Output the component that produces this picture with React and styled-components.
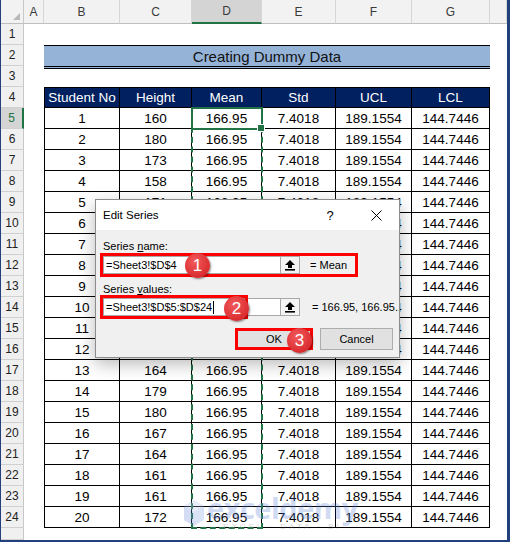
import React from 'react';
import styled, { createGlobalStyle } from 'styled-components';

const GlobalStyle = createGlobalStyle`
  html, body { margin: 0; padding: 0; background: #fff; overflow: hidden; }
  * { box-sizing: border-box; }
`;

const COLS = ['A', 'B', 'C', 'D', 'E', 'F', 'G', ''];
const HEADERS = ['Student No', 'Height', 'Mean', 'Std', 'UCL', 'LCL'];
const HEIGHTS = [160, 180, 173, 158, 171, 165, 170, 158, 162, 166, 155, 173, 164, 179, 180, 167, 164, 161, 161, 172];

const Frame = styled.div`
  width: 510px;
  height: 542px;
  border-left: 1px solid #23407e;
  border-right: 3px solid #23407e;
  border-bottom: 2px solid #23407e;
  overflow: hidden;
  background: #fff;
`;

const Sheet = styled.div`
  position: relative;
  display: grid;
  grid-template-columns: 23px 20px 76px 72px 70px 74px 76px 78px 1fr;
  grid-template-rows: 24px repeat(24, 21px) 1fr;
  height: 100%;
  font-family: "Liberation Sans", Arial, sans-serif;
`;

const Corner = styled.div`
  position: relative;
  background: #f2f2f2;
  border-right: 1px solid #c8c8c8;
  border-bottom: 1px solid #bfbfbf;

  &::after {
    content: '';
    position: absolute;
    right: 3px;
    bottom: 3px;
    border-left: 7px solid transparent;
    border-bottom: 7px solid #b8b8b8;
  }
`;

const ColHead = styled.div`
  display: flex;
  align-items: center;
  justify-content: center;
  background: ${p => (p.$active ? '#d4d4d4' : '#f2f2f2')};
  border-right: 1px solid #d6d6d6;
  border-bottom: ${p => (p.$active ? '2px solid #217346' : '1px solid #bfbfbf')};
  font-size: 12px;
  color: #3a3a3a;
`;

const RowHead = styled.div`
  display: flex;
  align-items: center;
  justify-content: center;
  background: ${p => (p.$active ? '#d4d4d4' : '#f0f0f0')};
  border-right: ${p => (p.$active ? '2px solid #217346' : '1px solid #c8c8c8')};
  border-bottom: 1px solid #d0d0d0;
  font-size: 12px;
  color: ${p => (p.$active ? '#217346' : '#222')};
`;

const Blank = styled.div``;

const TitleCell = styled.div`
  grid-column: span 6;
  margin-bottom: -3px;
  display: flex;
  align-items: center;
  justify-content: center;
  background: #95b3d7;
  border-top: 1px solid #000;
  border-bottom: 3px double #000;
  font-size: 15px;
  color: #111;
`;

const HeadCell = styled.div`
  display: flex;
  align-items: center;
  justify-content: center;
  background: #002060;
  color: #fff;
  font-size: 13.5px;
  border-top: 1px solid #000;
  border-right: 1px solid #000;
  border-bottom: 1px solid #000;
  border-left: ${p => (p.$first ? '1px solid #000' : 'none')};
`;

const DataCell = styled.div`
  display: flex;
  align-items: center;
  justify-content: center;
  font-size: 13.5px;
  color: #000;
  border-right: 1px solid #000;
  border-bottom: 1px solid #000;
  border-left: ${p => (p.$first ? '1px solid #000' : 'none')};
`;

const CopyRange = styled.div`
  position: absolute;
  left: 190px;
  top: 107px;
  width: 72px;
  height: 422px;
  border: 2px dashed #217346;
  pointer-events: none;
`;

const ActiveCell = styled.div`
  position: absolute;
  left: 190px;
  top: 107px;
  width: 72px;
  height: 23px;
  border: 2px solid #217346;
  pointer-events: none;

  &::after {
    content: '';
    position: absolute;
    right: -4px;
    bottom: -4px;
    width: 6px;
    height: 6px;
    background: #217346;
    border: 1px solid #fff;
  }
`;

const Watermark = styled.div`
  position: absolute;
  left: 182px;
  top: 494px;
  display: flex;
  align-items: center;
  gap: 2px;
  opacity: 0.28;
  pointer-events: none;
`;

const MarkWords = styled.div`
  display: flex;
  flex-direction: column;
  align-items: center;
  color: #5b7fd6;
`;

const MarkName = styled.span`
  font-family: "Open Sans", "Liberation Sans", sans-serif;
  font-size: 29px;
  font-weight: 700;
  line-height: 28px;
  letter-spacing: -0.5px;
`;

const MarkTag = styled.span`
  font-family: "Liberation Sans", Arial, sans-serif;
  font-size: 8px;
  letter-spacing: 3px;
  color: #6d6d6d;
`;

/* dialog */

const Dialog = styled.div`
  position: absolute;
  left: 94px;
  top: 199px;
  width: 305px;
  height: 159px;
  display: flex;
  flex-direction: column;
  background: #f0f0f0;
  border: 1px solid #8c8c8c;
  box-shadow: 0 6px 16px rgba(0, 0, 0, 0.28);
  font-family: "Liberation Sans", Arial, sans-serif;
  font-size: 11px;
  color: #000;
  overflow: hidden;
`;

const TitleBar = styled.div`
  height: 30px;
  flex: none;
  display: flex;
  align-items: center;
  padding-left: 7px;
  background: #fff;
`;

const DialogTitle = styled.span`
  flex: 1;
  font-size: 11.5px;
`;

const CaptionButton = styled.div`
  width: 46px;
  height: 30px;
  display: flex;
  align-items: center;
  justify-content: center;
  font-size: 13px;
`;

const DialogBody = styled.div`
  display: flex;
  flex-direction: column;
  padding: 9px 6px 0 7px;
`;

const Label = styled.div`
  line-height: 14px;
  margin-top: ${p => p.$gap}px;

  u { text-decoration: underline; }
`;

const FieldRow = styled.div`
  position: relative;
  display: flex;
  align-items: center;
  height: 18px;
  margin-top: ${p => p.$gap}px;
  white-space: nowrap;
`;

const RefInput = styled.div`
  flex: none;
  width: 177px;
  height: 18px;
  display: flex;
  align-items: center;
  padding-left: 2px;
  background: #fff;
  border: 1px solid #a8a8a8;
  border-right: none;
`;

const Caret = styled.span`
  display: inline-block;
  width: 1px;
  height: 13px;
  margin-left: 1px;
  background: #000;
`;

const CollapseButton = styled.div`
  width: 20px;
  height: 18px;
  flex: none;
  display: flex;
  align-items: center;
  justify-content: center;
  background: #f4f4f4;
  border: 1px solid #a8a8a8;
`;

const Preview = styled.span`
  flex: none;
  margin-left: ${p => p.$gap}px;
`;

const ButtonRow = styled.div`
  display: flex;
  justify-content: flex-end;
  gap: 9px;
  margin-top: 12px;
`;

const Button = styled.div`
  position: relative;
  width: ${p => p.$w}px;
  height: 22px;
  display: flex;
  align-items: center;
  justify-content: center;
  background: #e1e1e1;
  border: 1px solid #adadad;
`;

const RedMark = styled.div`
  position: absolute;
  left: ${p => p.$x}px;
  top: ${p => p.$y}px;
  width: ${p => p.$w}px;
  height: ${p => p.$h}px;
  border: 3px solid #ff0000;
  pointer-events: none;
`;

const Badge = styled.div`
  position: absolute;
  left: ${p => p.$x}px;
  top: ${p => p.$y}px;
  width: 25px;
  height: 25px;
  border-radius: 50%;
  display: flex;
  align-items: center;
  justify-content: center;
  background: radial-gradient(circle at 40% 35%, #f25a5c, #dc3033 65%, #b9201f);
  box-shadow: 1px 1px 2px rgba(0, 0, 0, 0.45);
  color: #fff;
  font-size: 17px;
  font-family: "Liberation Sans", Arial, sans-serif;
`;

const UpIcon = () => (
  <svg width="10" height="11" viewBox="0 0 10 11">
    <path d="M5 0 L10 5 H7 V8 H3 V5 H0 Z" fill="#000" />
    <rect x="0" y="9" width="10" height="1.6" fill="#000" />
  </svg>
);

const CloseIcon = () => (
  <svg width="11" height="11" viewBox="0 0 11 11">
    <path d="M0.5 0.5 L10.5 10.5 M10.5 0.5 L0.5 10.5" stroke="#000" strokeWidth="1" />
  </svg>
);

const CubeIcon = () => (
  <svg width="22" height="30" viewBox="0 0 22 30">
    <path d="M11 2 L21 8 V22 L11 28 L1 22 V8 Z" fill="#7d9be0" />
    <path d="M11 2 L21 8 L11 14 L1 8 Z" fill="#aebff0" />
    <path d="M11 14 V28 L1 22 V8 Z" fill="#6585d6" />
  </svg>
);

const EditSeries = () => (
  <Dialog>
    <TitleBar>
      <DialogTitle>Edit Series</DialogTitle>
      <CaptionButton>?</CaptionButton>
      <CaptionButton><CloseIcon /></CaptionButton>
    </TitleBar>
    <DialogBody>
      <Label $gap={0}>Series <u>n</u>ame:</Label>
      <FieldRow $gap={3}>
        <RefInput>=Sheet3!$D$4</RefInput>
        <CollapseButton><UpIcon /></CollapseButton>
        <Preview $gap={10}>= Mean</Preview>
        <RedMark $x={-3} $y={-3} $w={258} $h={24} />
        <Badge $x={82} $y={-3}>1</Badge>
      </FieldRow>
      <Label $gap={8}>Series <u>v</u>alues:</Label>
      <FieldRow $gap={2}>
        <RefInput>=Sheet3!$D$5:$D$24<Caret /></RefInput>
        <CollapseButton><UpIcon /></CollapseButton>
        <Preview $gap={12}>= 166.95, 166.95...</Preview>
        <RedMark $x={-3} $y={-3} $w={148} $h={24} />
        <Badge $x={121} $y={-2}>2</Badge>
      </FieldRow>
      <ButtonRow>
        <Button $w={74}>
          OK
          <RedMark $x={-3} $y={-1} $w={78} $h={22} />
          <Badge $x={49} $y={-1}>3</Badge>
        </Button>
        <Button $w={73}>Cancel</Button>
      </ButtonRow>
    </DialogBody>
  </Dialog>
);

const renderRow = r => {
  const cells = [
    <RowHead key="rh" $active={r === 5}>{r <= 24 ? r : ''}</RowHead>,
    <Blank key="A" />,
  ];
  if (r === 2) {
    cells.push(<TitleCell key="title">Creating Dummy Data</TitleCell>);
  } else if (r === 4) {
    HEADERS.forEach((h, i) => cells.push(<HeadCell key={h} $first={i === 0}>{h}</HeadCell>));
  } else if (r >= 5 && r <= 24) {
    const n = r - 4;
    const values = [n, HEIGHTS[n - 1], '166.95', '7.4018', '189.1554', '144.7446'];
    values.forEach((v, i) => cells.push(<DataCell key={i} $first={i === 0}>{v}</DataCell>));
  } else {
    for (let i = 0; i < 6; i++) cells.push(<Blank key={i} />);
  }
  cells.push(<Blank key="H" />);
  return <React.Fragment key={r}>{cells}</React.Fragment>;
};

export default function App() {
  const rows = [];
  for (let r = 1; r <= 25; r++) rows.push(renderRow(r));

  return (
    <>
      <GlobalStyle />
      <Frame>
        <Sheet>
          <Corner />
          {COLS.map((c, i) => (
            <ColHead key={i} $active={c === 'D'}>{c}</ColHead>
          ))}
          {rows}
          <CopyRange />
          <ActiveCell />
          <Watermark>
            <CubeIcon />
            <MarkWords>
              <MarkName>exceldemy</MarkName>
              <MarkTag>EXCEL · DATA · BI</MarkTag>
            </MarkWords>
          </Watermark>
          <EditSeries />
        </Sheet>
      </Frame>
    </>
  );
}
